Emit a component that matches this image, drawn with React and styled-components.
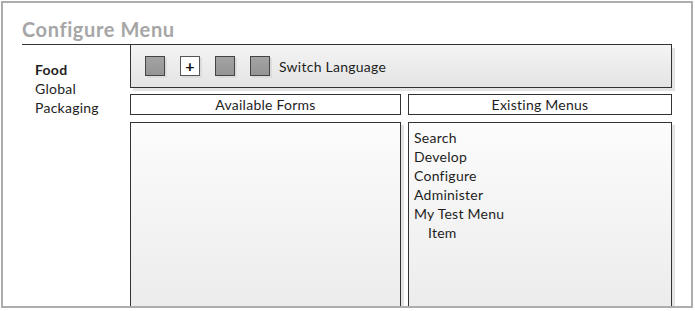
import styled, { createGlobalStyle } from "styled-components"

const GlobalStyle = createGlobalStyle`
  html, body {
    margin: 0;
    padding: 0;
    background: #ffffff;
  }
  body {
    font-family: Lato, "Liberation Sans", sans-serif;
    color: #1e1e1e;
    letter-spacing: 0.25px;
  }
`

const Frame = styled.div`
  box-sizing: border-box;
  margin: 1px;
  width: 692px;
  height: 307px;
  border: 2px solid #adadad;
  padding: 0 19px;
  display: flex;
  flex-direction: column;
  overflow: hidden;
  background: #ffffff;
`

const Title = styled.h1`
  box-sizing: border-box;
  margin: 0;
  height: 42px;
  padding-top: 14px;
  border-bottom: 1px solid #333;
  font-size: 20px;
  line-height: 24px;
  font-weight: 700;
  letter-spacing: 0.6px;
  color: #a6a6a6;
`

const Body = styled.div`
  flex: 1;
  display: grid;
  grid-template-columns: 108px 1fr;
  min-height: 0;
`

const Nav = styled.ul`
  list-style: none;
  margin: 0;
  padding: 15px 0 0 13px;
`

const NavItem = styled.li`
  font-size: 14px;
  line-height: 19px;
  font-weight: ${(p) => (p.$active ? 700 : 400)};
  color: #1e1e1e;
`

const Main = styled.div`
  display: flex;
  flex-direction: column;
  min-height: 0;
`

const Toolbar = styled.div`
  box-sizing: border-box;
  height: 43px;
  display: flex;
  align-items: center;
  gap: 15px;
  padding-left: 14px;
  border: 1px solid #333;
  border-top: none;
  background: linear-gradient(#f4f4f4, #e4e4e4);
  box-shadow: 3px 3px 0 #e4e4e4;
`

const Tool = styled.div`
  box-sizing: border-box;
  width: 20px;
  height: 20px;
  border: 1px solid ${(p) => (p.$plus ? "#555" : "#444")};
  background: ${(p) =>
    p.$plus ? "#ffffff" : "linear-gradient(#a3a3a3, #959595)"};
  box-shadow: 2px 2px 0 #dcdcdc;
  display: flex;
  align-items: center;
  justify-content: center;
  font-size: 16px;
  font-weight: 700;
  line-height: 1;
  color: #111;
`

const ToolLabel = styled.span`
  margin-left: -6px;
  font-size: 14px;
  color: #1e1e1e;
`

const Columns = styled.div`
  display: grid;
  grid-template-columns: 271px 1fr;
  column-gap: 7px;
  row-gap: 7px;
  grid-template-rows: 21px 1fr;
  margin-top: 6px;
  flex: 1;
  min-height: 0;
`

const Heading = styled.div`
  box-sizing: border-box;
  border: 1px solid #333;
  font-size: 14px;
  line-height: 19px;
  text-align: center;
  background: #fff;
`

const Panel = styled.div`
  box-sizing: border-box;
  border: 1px solid #333;
  border-bottom: none;
  margin-bottom: -2px;
  padding: 5px 5px;
  background: linear-gradient(#fcfcfc, #ececec);
  box-shadow: 3px 3px 0 #e4e4e4;
`

const MenuItem = styled.div`
  font-size: 14px;
  line-height: 19px;
  padding-left: ${(p) => p.$depth * 14}px;
`

const menus = [
  { label: "Search", depth: 0 },
  { label: "Develop", depth: 0 },
  { label: "Configure", depth: 0 },
  { label: "Administer", depth: 0 },
  { label: "My Test Menu", depth: 0 },
  { label: "Item", depth: 1 },
]

export default function App() {
  return (
    <>
      <GlobalStyle />
      <Frame>
        <Title>Configure Menu</Title>
        <Body>
          <Nav>
            <NavItem $active>Food</NavItem>
            <NavItem>Global</NavItem>
            <NavItem>Packaging</NavItem>
          </Nav>
          <Main>
            <Toolbar>
              <Tool />
              <Tool $plus>+</Tool>
              <Tool />
              <Tool />
              <ToolLabel>Switch Language</ToolLabel>
            </Toolbar>
            <Columns>
              <Heading>Available Forms</Heading>
              <Heading>Existing Menus</Heading>
              <Panel />
              <Panel>
                {menus.map((m) => (
                  <MenuItem key={m.label} $depth={m.depth}>
                    {m.label}
                  </MenuItem>
                ))}
              </Panel>
            </Columns>
          </Main>
        </Body>
      </Frame>
    </>
  )
}
